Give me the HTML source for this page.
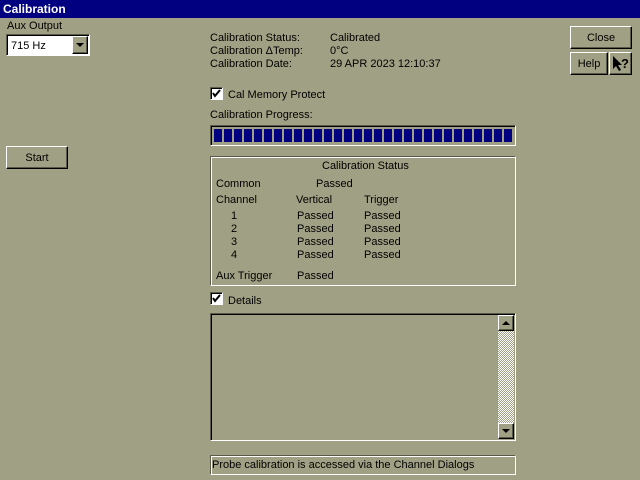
<!DOCTYPE html>
<html><head><style>
*{margin:0;padding:0;box-sizing:border-box}
body{width:640px;height:480px;background:#a0a084;font:11px "Liberation Sans",sans-serif;color:#000;position:relative;overflow:hidden}
.a{position:absolute;white-space:nowrap}
.t{margin-top:1px}
.btn{position:absolute;background:#a0a084;border:1px solid;border-color:#fff #000 #000 #fff;box-shadow:inset -1px -1px 0 #5a5a48;text-align:center}
.sunk{position:absolute;border:1px solid;border-color:#5a5a48 #fff #fff #5a5a48;box-shadow:inset 1px 1px 0 #000}
.grp{position:absolute;border:1px solid;border-color:#5a5a48 #fff #fff #5a5a48;box-shadow:inset 1px 1px 0 #fff,1px 1px 0 #5a5a48 inset}
.cb{position:absolute;width:13px;height:13px;background:#fff;border:1px solid;border-color:#5a5a48 #fff #fff #5a5a48;box-shadow:inset 1px 1px 0 #000}
</style></head><body>
<div class="a" style="left:0;top:0;width:640px;height:18px;background:#000080;color:#fff;font-weight:bold;font-size:12px;padding:2px 3px">Calibration</div>
<div class="a t" style="left:7px;top:19px">Aux Output</div>
<div class="sunk" style="left:6px;top:34px;width:84px;height:22px;background:#fff"><span class="a" style="left:4px;top:5px">715 Hz</span>
<div class="btn" style="left:65px;top:1px;width:16px;height:18px"><svg width="14" height="16"><path d="M3 6h8l-4 4z" fill="#000"/></svg></div></div>
<div class="a t" style="left:210px;top:31px;line-height:13px">Calibration Status:<br>Calibration ΔTemp:<br>Calibration Date:</div>
<div class="a t" style="left:330px;top:31px;line-height:13px">Calibrated<br>0°C<br>29 APR 2023 12:10:37</div>
<div class="btn" style="left:570px;top:26px;width:62px;height:23px;line-height:22px">Close</div>
<div class="btn" style="left:570px;top:52px;width:38px;height:23px;line-height:22px">Help</div>
<div class="btn" style="left:609px;top:52px;width:23px;height:23px"><svg width="21" height="21"><path d="M3 3v13l3-3 3 5 2-1-3-5h4z" fill="#000"/><text x="11" y="15" font-family="Liberation Sans" font-weight="bold" font-size="13">?</text></svg></div>
<div class="btn" style="left:6px;top:146px;width:62px;height:23px;line-height:22px">Start</div>
<div class="cb" style="left:210px;top:87px"><svg width="11" height="11"><path d="M2 5l2 3 5-6" stroke="#000" stroke-width="2" fill="none"/></svg></div>
<div class="a t" style="left:228px;top:88px">Cal Memory Protect</div>
<div class="a t" style="left:210px;top:108px">Calibration Progress:</div>
<div class="sunk" style="left:210px;top:125px;width:306px;height:21px;background:#a0a084">
<div class="a" style="left:3px;top:3px;width:298px;height:13px;background:repeating-linear-gradient(90deg,#000080 0 8px,#a0a084 8px 10px)"></div></div>
<div class="grp" style="left:210px;top:156px;width:306px;height:130px"></div>
<div class="a t" style="left:322px;top:159px">Calibration Status</div>
<div class="a t" style="left:216px;top:177px">Common</div><div class="a t" style="left:316px;top:177px">Passed</div>
<div class="a t" style="left:216px;top:193px">Channel</div><div class="a t" style="left:296px;top:193px">Vertical</div><div class="a t" style="left:364px;top:193px">Trigger</div>
<div class="a t" style="left:231px;top:209px;line-height:13px">1<br>2<br>3<br>4</div>
<div class="a t" style="left:297px;top:209px;line-height:13px">Passed<br>Passed<br>Passed<br>Passed</div>
<div class="a t" style="left:364px;top:209px;line-height:13px">Passed<br>Passed<br>Passed<br>Passed</div>
<div class="a t" style="left:216px;top:269px">Aux Trigger</div><div class="a t" style="left:297px;top:269px">Passed</div>
<div class="cb" style="left:210px;top:292px"><svg width="11" height="11"><path d="M2 5l2 3 5-6" stroke="#000" stroke-width="2" fill="none"/></svg></div>
<div class="a t" style="left:228px;top:294px">Details</div>
<div class="sunk" style="left:210px;top:313px;width:306px;height:128px">
<div class="a" style="left:287px;top:1px;width:16px;height:124px;background:repeating-conic-gradient(#fff 0 25%,#a0a084 0 50%) 0 0/2px 2px"></div>
<div class="btn" style="left:287px;top:1px;width:16px;height:16px"><svg width="14" height="14"><path d="M3 9h8l-4-4z" fill="#000"/></svg></div>
<div class="btn" style="left:287px;top:109px;width:16px;height:16px"><svg width="14" height="14"><path d="M3 5h8l-4 4z" fill="#000"/></svg></div></div>
<div class="grp" style="left:210px;top:455px;width:306px;height:20px"></div>
<div class="a t" style="left:212px;top:458px">Probe calibration is accessed via the Channel Dialogs</div>
</body></html>
